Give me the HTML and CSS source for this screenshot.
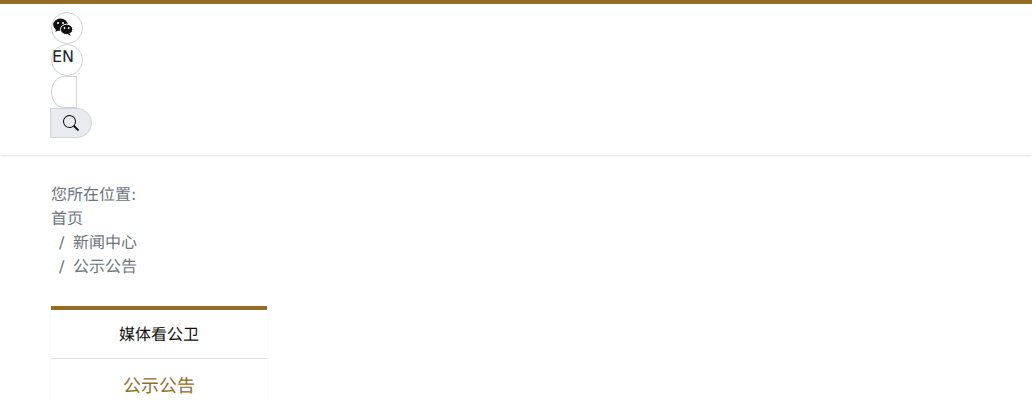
FILE: index.html
```html
<!DOCTYPE html>
<html lang="zh-CN">
<head>
    <meta charset="UTF-8">
    <meta name="viewport" content="width=device-width, initial-scale=1.0">
    <title>公示公告</title>
    <link rel="stylesheet" href="styles.css">
</head>
<body>
    <header class="header">
        <div class="container">
            <a class="circle-btn" href="#">
                <svg class="wechat" viewBox="0 0 20 18" width="20" height="18">
                    <ellipse cx="7.5" cy="6.8" rx="7.3" ry="6.2" fill="#111"/>
                    <path d="M3 11l-.6 3 3.2-1.8z" fill="#111"/>
                    <ellipse cx="13.6" cy="11.4" rx="6.2" ry="5.2" fill="#111" stroke="#fff" stroke-width="1"/>
                    <path d="M16.8 15.5l1 2.2-3-1.3z" fill="#111"/>
                    <circle cx="5" cy="5" r="1" fill="#fff"/>
                    <circle cx="10" cy="5" r="1" fill="#fff"/>
                    <circle cx="11.5" cy="10" r=".9" fill="#fff"/>
                    <circle cx="15.7" cy="10" r=".9" fill="#fff"/>
                </svg>
            </a>
            <a class="circle-btn lang" href="#">EN</a>
            <input class="search-input" type="text">
            <button class="search-btn" type="button">
                <svg viewBox="0 0 16 16" width="16" height="16">
                    <path d="M11.742 10.344a6.5 6.5 0 1 0-1.397 1.398l3.85 3.85a1 1 0 0 0 1.415-1.414l-3.85-3.85zM12 6.5a5.5 5.5 0 1 1-11 0 5.5 5.5 0 0 1 11 0z" fill="#111"/>
                </svg>
            </button>
        </div>
    </header>

    <main class="container">
        <div class="crumbs">
            <div>您所在位置:</div>
            <div><a href="#">首页</a></div>
            <div class="crumb-item"><span class="sep">/</span>新闻中心</div>
            <div class="crumb-item"><span class="sep">/</span>公示公告</div>
        </div>

        <nav class="side-nav">
            <a class="side-link" href="#">媒体看公卫</a>
            <a class="side-link active" href="#">公示公告</a>
        </nav>
    </main>
</body>
</html>
```

FILE: styles.css
```css
* {
    box-sizing: border-box;
}
body {
    margin: 0;
    font-family: "DejaVu Sans", sans-serif;
    font-size: 16px;
    line-height: 24px;
    color: #212529;
    background-color: #fff;
    text-rendering: geometricPrecision;
}
a {
    color: inherit;
    text-decoration: none;
}
.container {
    padding: 0 51px;
}
.header {
    height: 155px;
    padding-top: 8px;
    border-top: 4px solid #946c26;
    box-shadow: 0 1px 3px rgba(0, 0, 0, 0.12);
}
.circle-btn {
    display: block;
    width: 32px;
    height: 32px;
    border: 1px solid #ced4da;
    border-radius: 50%;
}
.wechat {
    display: block;
    margin: 5px 0 0 1px;
}
.lang {
    line-height: 24px;
    white-space: nowrap;
}
.search-input {
    display: block;
    width: 26px;
    height: 32px;
    padding: 0;
    border: 1px solid #ced4da;
    border-radius: 50% 0 0 50%;
    background: #fff;
}
.search-btn {
    display: flex;
    align-items: center;
    justify-content: center;
    width: 42px;
    height: 30px;
    margin-left: -1px;
    padding: 0;
    border: 1px solid #ced4da;
    border-radius: 0 21px 21px 0;
    background-color: #e9ecef;
}
.crumbs {
    padding-top: 28px;
    color: #6c757d;
}
.sep {
    display: inline-block;
    width: 22px;
    padding-left: 8px;
}
.side-nav {
    width: 216px;
    margin-top: 27px;
    border-top: 4px solid #946c26;
    box-shadow: 0 0 2px rgba(0, 0, 0, 0.08);
}
.side-link {
    display: block;
    height: 49px;
    line-height: 49px;
    text-align: center;
    border-bottom: 1px solid #dee2e6;
    color: #111;
}
.side-link.active {
    height: 56px;
    line-height: 56px;
    font-size: 18px;
    color: #946c26;
}
```
